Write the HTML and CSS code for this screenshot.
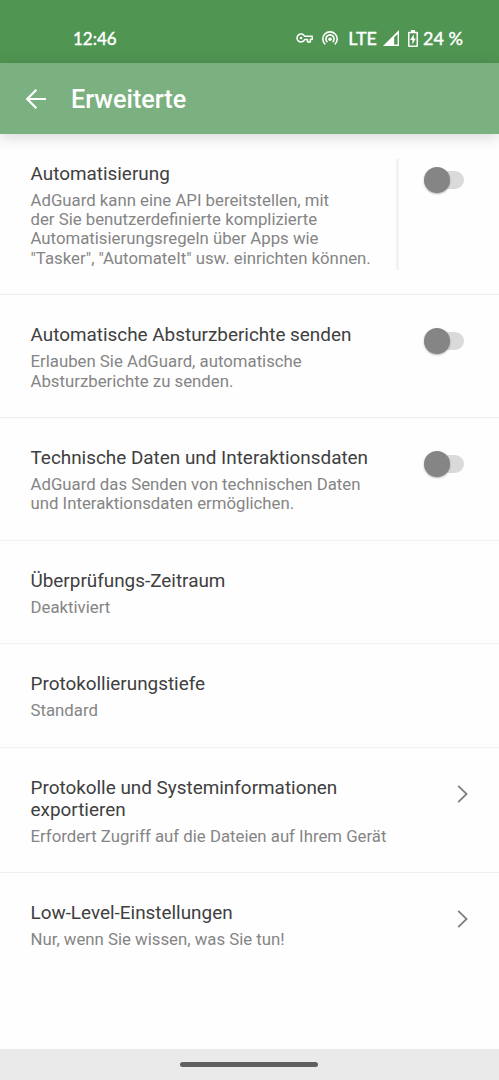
FILE: index.html
```html
<!DOCTYPE html>
<html lang="de">
<head>
    <meta charset="UTF-8">
    <meta name="viewport" content="width=device-width, initial-scale=1.0">
    <title>Erweiterte</title>
    <link rel="stylesheet" href="styles.css">
</head>
<body>

    <!-- Status bar -->
    <div class="status-bar">
        <span class="clock">12:46</span>
        <div class="status-icons">
            <svg class="icon-key" width="18" height="12" viewBox="0 0 18 12" fill="none" stroke="#fff" stroke-width="1.5">
                <path d="M8.6 4.3H16.2V7.6H14.3V10H11.5V7.6H8.6A4 4 0 1 1 8.6 4.3Z" stroke-linejoin="round"/>
                <circle cx="5" cy="6" r="1.3" fill="#fff" stroke="none"/>
            </svg>
            <svg class="icon-hotspot" width="18" height="16" viewBox="0 0 18 16" fill="none" stroke="#fff" stroke-width="1.6">
                <path d="M4.2 14.4A7.2 7.2 0 1 1 13.8 14.4"/>
                <path d="M6.4 12.1A4.1 4.1 0 1 1 11.6 12.1"/>
                <circle cx="9" cy="9.3" r="1.8" fill="#fff" stroke="none"/>
            </svg>
            <span class="network">LTE</span>
            <svg class="icon-signal" width="16" height="16" viewBox="0 0 16 16">
                <path d="M16 0V16H0ZM14.6 4L11.2 7.2V14.6H14.6Z" fill="#fff" fill-rule="evenodd"/>
            </svg>
            <svg class="icon-battery" width="10" height="17" viewBox="0 0 10 17">
                <path d="M3 0H7V1.7H8.8Q10 1.7 10 2.9V15.8Q10 17 8.8 17H1.2Q0 17 0 15.8V2.9Q0 1.7 1.2 1.7H3ZM1.5 3.2V15.5H8.5V3.2Z" fill="#fff" fill-rule="evenodd"/>
                <path d="M5.8 4.2L2.2 10H4.4V14.5L7.8 8.6H5.8Z" fill="#fff"/>
            </svg>
            <span class="battery">24 %</span>
        </div>
    </div>

    <!-- Toolbar -->
    <header class="toolbar">
        <svg class="back" width="22" height="22" viewBox="0 0 22 22" fill="none" stroke="#fff" stroke-width="2.2">
            <path d="M21 11H2.4M11.4 1.8L2.2 11L11.4 20.2"/>
        </svg>
        <h1>Erweiterte</h1>
    </header>

    <!-- Settings -->
    <main class="settings">
        <div class="row">
            <div class="text">
                <h2>Automatisierung</h2>
                <p>AdGuard kann eine API bereitstellen, mit<br>der Sie benutzerdefinierte komplizierte<br>Automatisierungsregeln über Apps wie<br>"Tasker", "AutomateIt" usw. einrichten können.</p>
            </div>
            <div class="divider"></div>
            <div class="switch"></div>
        </div>
        <div class="row">
            <div class="text">
                <h2>Automatische Absturzberichte senden</h2>
                <p>Erlauben Sie AdGuard, automatische<br>Absturzberichte zu senden.</p>
            </div>
            <div class="switch"></div>
        </div>
        <div class="row">
            <div class="text">
                <h2>Technische Daten und Interaktionsdaten</h2>
                <p>AdGuard das Senden von technischen Daten<br>und Interaktionsdaten ermöglichen.</p>
            </div>
            <div class="switch"></div>
        </div>
        <div class="row">
            <div class="text">
                <h2>Überprüfungs-Zeitraum</h2>
                <p>Deaktiviert</p>
            </div>
        </div>
        <div class="row">
            <div class="text">
                <h2>Protokollierungstiefe</h2>
                <p>Standard</p>
            </div>
        </div>
        <div class="row">
            <div class="text">
                <h2>Protokolle und Systeminformationen<br>exportieren</h2>
                <p>Erfordert Zugriff auf die Dateien auf Ihrem Gerät</p>
            </div>
            <svg class="chevron" width="12" height="18" viewBox="0 0 12 18" fill="none" stroke="#7f7f7f" stroke-width="1.8">
                <path d="M1.2 .8L9.6 9L1.2 17.2"/>
            </svg>
        </div>
        <div class="row">
            <div class="text">
                <h2>Low-Level-Einstellungen</h2>
                <p>Nur, wenn Sie wissen, was Sie tun!</p>
            </div>
            <svg class="chevron" width="12" height="18" viewBox="0 0 12 18" fill="none" stroke="#7f7f7f" stroke-width="1.8">
                <path d="M1.2 .8L9.6 9L1.2 17.2"/>
            </svg>
        </div>
    </main>

    <!-- Gesture bar -->
    <footer class="nav-bar">
        <div class="handle"></div>
    </footer>

</body>
</html>
```
FILE: styles.css
```css
* {
    box-sizing: border-box;
}
body {
    display: flex;
    flex-direction: column;
    height: 1080px;
    margin: 0;
    background-color: #fefefe;
    font-family: Roboto, sans-serif;
    overflow: hidden;
}
h1, h2, p {
    margin: 0;
    font-weight: 400;
    white-space: nowrap;
}
.status-bar {
    display: flex;
    justify-content: space-between;
    align-items: center;
    height: 63px;
    padding: 13px 36px 0 73px;
    background-color: #509552;
    color: #fff;
    font-family: "Lato Medium", Lato, sans-serif;
    font-size: 18px;
    font-weight: 500;
}
.clock {
    font-size: 17px;
    -webkit-text-stroke: 0.3px #fff;
}
.status-icons {
    display: flex;
    align-items: center;
    -webkit-text-stroke: 0.3px #fff;
}
.icon-hotspot {
    margin-left: 7px;
}
.network {
    margin-left: 9px;
}
.icon-signal {
    margin-left: 6px;
}
.icon-battery {
    margin: 0 5px 0 9px;
}
.battery {
    width: 40px;
    white-space: nowrap;
}
.toolbar {
    display: flex;
    align-items: center;
    flex-shrink: 0;
    height: 71px;
    padding: 0 24.5px;
    background-color: #7bb080;
    color: #fff;
    box-shadow: 0 3px 14px rgba(0, 0, 0, 0.16);
}
.toolbar h1 {
    margin: 2px 0 0 24.5px;
    font-size: 25.2px;
    font-weight: 500;
}
.settings {
    flex: 1;
    margin-top: -0.5px;
}
.row {
    display: flex;
    align-items: flex-start;
    padding: 29px 30px 26px 30.5px;
    border-bottom: 1px solid #efefef;
}
.row:last-child {
    border-bottom: none;
}
.text {
    flex: 1;
    min-width: 0;
}
.row h2 {
    color: #404040;
    font-size: 18.9px;
    line-height: 22px;
}
.row p {
    margin-top: 6px;
    color: #858585;
    font-size: 16.77px;
    line-height: 19.4px;
}
.divider {
    align-self: stretch;
    width: 3px;
    margin: -4px 29px -2px 0;
    background-color: #f2f2f2;
}
.switch {
    position: relative;
    width: 36px;
    height: 18px;
    margin: 8px 5px 0 0;
    border-radius: 9px;
    background-color: #dadada;
}
.switch::before {
    content: "";
    position: absolute;
    top: -4px;
    left: -4.5px;
    width: 26px;
    height: 26px;
    border-radius: 50%;
    background-color: #858585;
    box-shadow: 0 1px 2px rgba(0, 0, 0, 0.3);
}
.chevron {
    margin-top: 8px;
}
.nav-bar {
    display: flex;
    justify-content: center;
    height: 31px;
    padding: 13px 1px 0 0;
    background-color: #eaeaea;
}
.handle {
    width: 138px;
    height: 5px;
    border-radius: 3px;
    background-color: #606060;
}
```
